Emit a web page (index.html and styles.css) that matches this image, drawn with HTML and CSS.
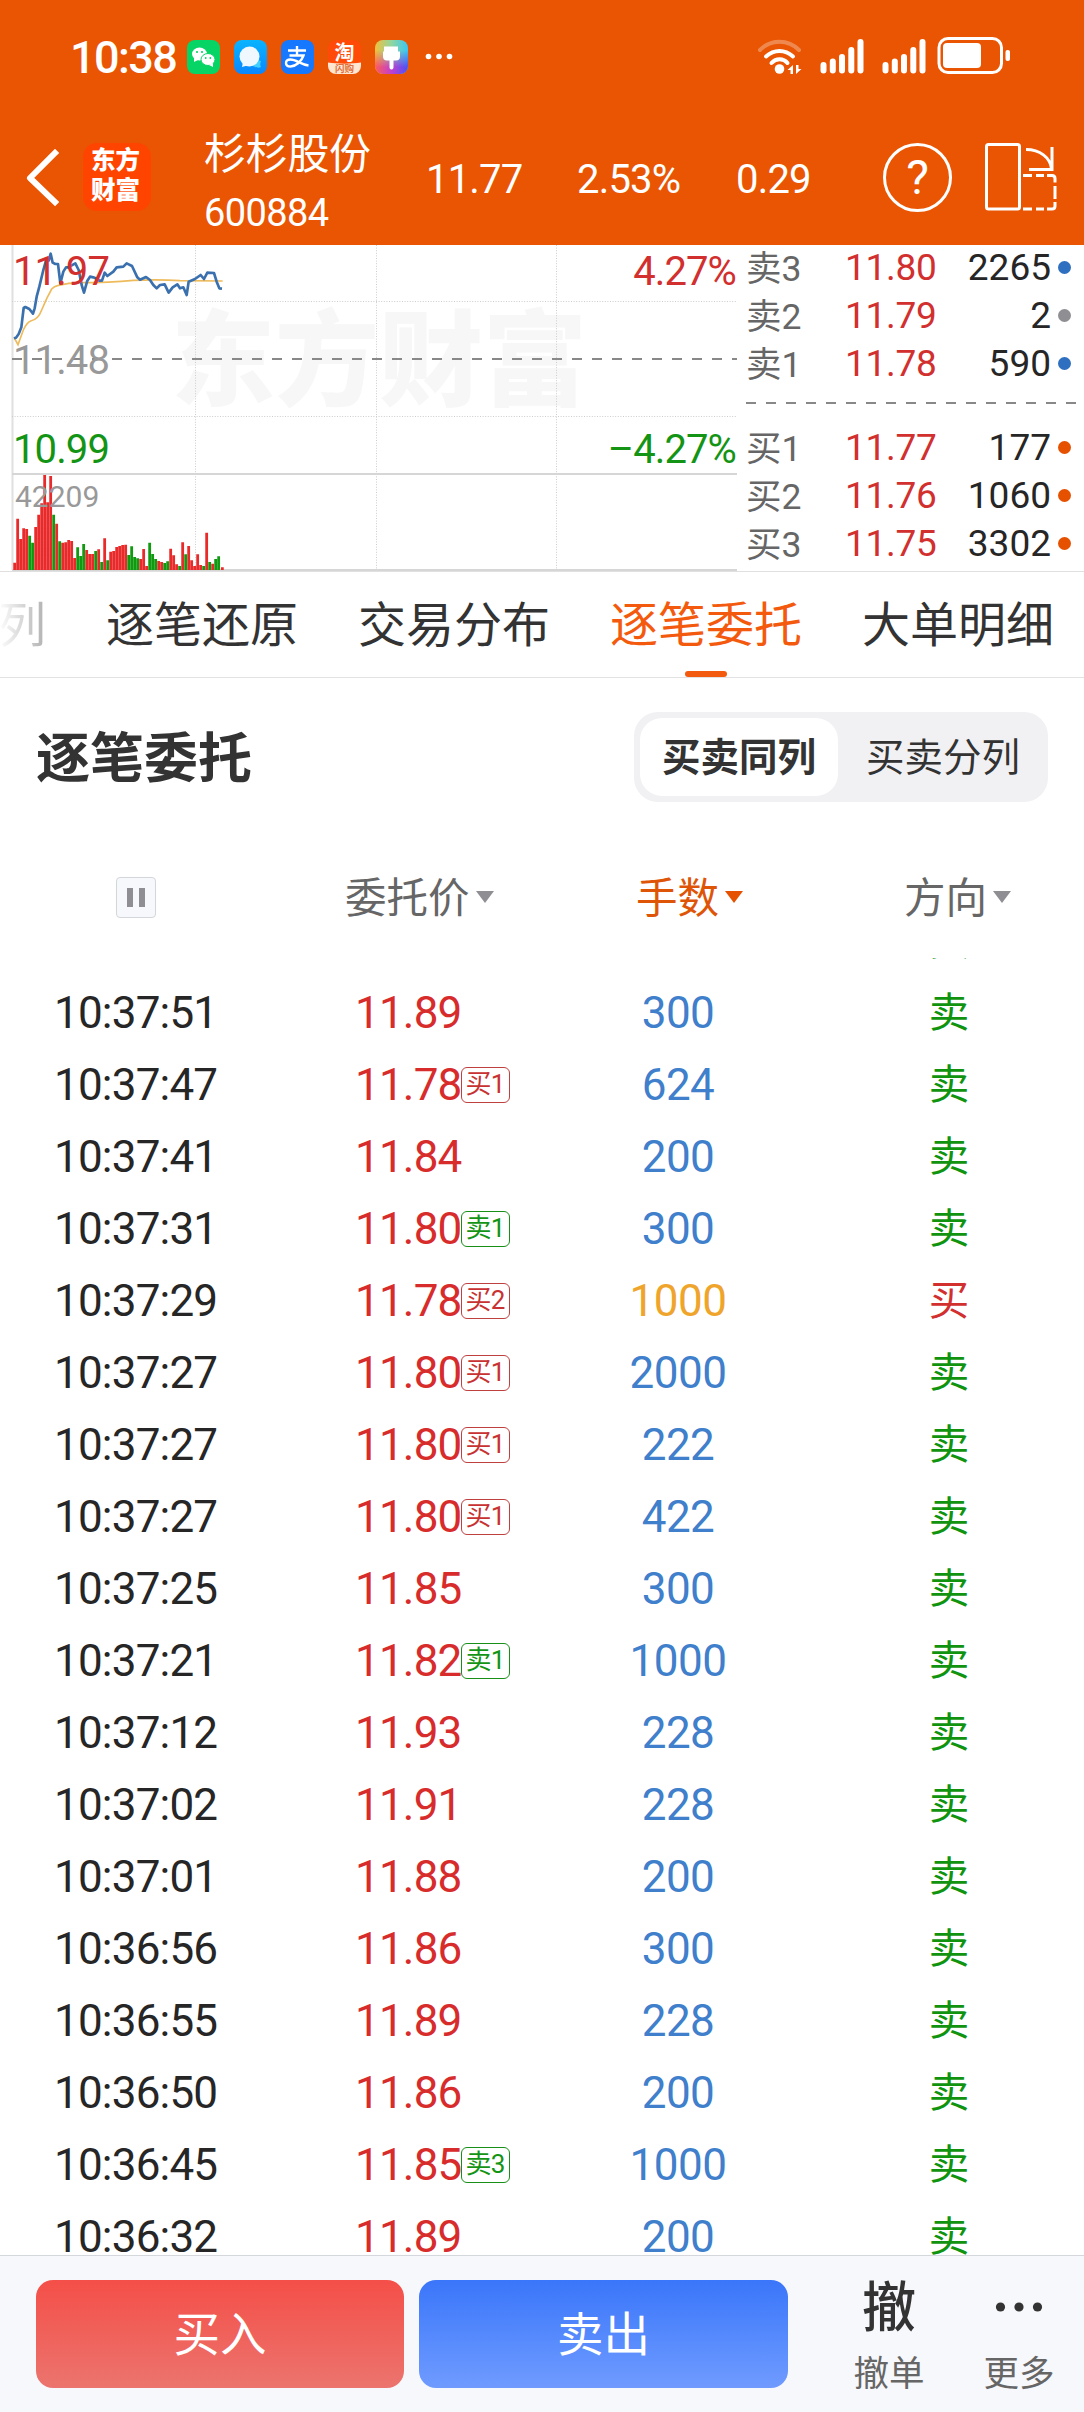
FILE: index.html
```html
<!DOCTYPE html>
<html lang="zh-CN">

<head>
    <meta charset="UTF-8">
    <meta name="viewport" content="width=device-width, initial-scale=1.0">
    <title>杉杉股份 600884 - 逐笔委托</title>
    <link rel="stylesheet" href="styles.css">
</head>

<body>

    <div class="top">
        <div class="status-bar">
            <div class="status-left">
                <span class="clock">10:38</span>
                <svg class="app-icons" width="268" height="34" viewBox="0 0 268 34">
                    <defs>
                        <linearGradient id="msg" x1="0" y1="0" x2="0" y2="1">
                            <stop offset="0" stop-color="#08b4ff" />
                            <stop offset="1" stop-color="#0a86ff" />
                        </linearGradient>
                        <linearGradient id="theme" x1="0" y1="0" x2="1" y2="0">
                            <stop offset="0" stop-color="#f3c03c" />
                            <stop offset="0.5" stop-color="#8fd6a0" />
                            <stop offset="1" stop-color="#3ac8f5" />
                        </linearGradient>
                        <linearGradient id="theme2" x1="0" y1="0" x2="1" y2="0">
                            <stop offset="0" stop-color="#ff5a5a" />
                            <stop offset="0.5" stop-color="#c040d0" />
                            <stop offset="1" stop-color="#4a50f5" />
                        </linearGradient>
                        <linearGradient id="fade" x1="0" y1="0" x2="0" y2="1">
                            <stop offset="0.3" stop-color="#000" />
                            <stop offset="0.8" stop-color="#fff" />
                        </linearGradient>
                        <mask id="lower">
                            <rect x="188" width="33" height="34" fill="url(#fade)" />
                        </mask>
                    </defs>
                    <!-- wechat -->
                    <rect width="33" height="34" rx="8" fill="#06d465" />
                    <ellipse cx="12.5" cy="14" rx="7.5" ry="6.5" fill="#fff" />
                    <path d="M7 18l0 4 4-2z" fill="#fff" />
                    <ellipse cx="21" cy="19.5" rx="7" ry="6" fill="#fff" stroke="#06d465" stroke-width="1" />
                    <path d="M22 25l4 2-0-4z" fill="#fff" />
                    <g fill="#06d465">
                        <circle cx="10" cy="12" r="1.1" />
                        <circle cx="15" cy="12" r="1.1" />
                        <circle cx="18.700" cy="18" r="0.9" />
                        <circle cx="23.300" cy="18" r="0.9" />
                    </g>
                    <!-- messages -->
                    <rect x="47" width="33" height="34" rx="8" fill="url(#msg)" />
                    <path d="M66 26c4 2 6 2 8 1-1-2-1-3 0-6l-4-1z" fill="#3fd0ff" />
                    <circle cx="62.500" cy="16.500" r="10" fill="#eff8ff" />
                    <path d="M56 22l-1 5 7-2z" fill="#eff8ff" />
                    <!-- alipay -->
                    <rect x="94" width="33" height="34" rx="8" fill="#1677ff" />
                    <path d="M101 10.500h18M110 6v9M102.500 15.500h14c-2 6-8 11-13 11-6 0-6-7 0-7 6 0 10 5 18 6" fill="none" stroke="#fff" stroke-width="2.400" />
                    <!-- taobao -->
                    <rect x="141" width="33" height="34" rx="8" fill="#ff4a08" />
                    <path d="M141 22.500c10 1.500 23 1.500 33 0V26a8 8 0 0 1-8 8h-17a8 8 0 0 1-8-8z" fill="#ffe6d2" />
                    <text x="147.500" y="19.500" class="ico-tao">淘</text>
                    <text x="148" y="32" class="ico-sub">闪购</text>
                    <!-- theme -->
                    <rect x="188" width="33" height="34" rx="8" fill="url(#theme)" />
                    <rect x="188" width="33" height="34" rx="8" fill="url(#theme2)" mask="url(#lower)" />
                    <path d="M197 6.500h14v5h2v5q0 4-4 4h-2.500v7a2 2 0 0 1-4 0v-7H200q-4 0-4-4v-5h1z" fill="#fff" />
                    <!-- more -->
                    <g fill="#fff">
                        <circle cx="241.500" cy="16.500" r="2.800" />
                        <circle cx="252" cy="16.500" r="2.800" />
                        <circle cx="262.500" cy="16.500" r="2.800" />
                    </g>
                </svg>
            </div>
            <svg class="system-icons" width="256" height="38" viewBox="0 0 256 38">
                <g fill="none" stroke="#fff" stroke-width="4" stroke-linecap="round">
                    <path d="M3 13c11-11 28-11 39 0" opacity="0.3" />
                    <path d="M9 19.500c8-7.500 19-7.500 27 0" />
                    <path d="M14.500 26c4.500-5 12-5 16 0" />
                </g>
                <circle cx="22.500" cy="32" r="4.800" fill="#fff" />
                <path d="M30.500 33l5.500-5v9h-2.500v-4zM44.500 32l-5.500 5v-9h2.500v4z" fill="#fff" />
                <g stroke="#fff" stroke-width="6" stroke-linecap="round">
                    <path d="M66.500 28v5.500M75.800 24.500v9M85 20v13.500M94.300 13v20.500M103.500 5v28.500" />
                    <path d="M128.500 28v5.500M137.800 24.500v9M147 20v13.500M156.300 13v20.500M165.500 5v28.500" />
                </g>
                <rect x="182" y="1.500" width="62.500" height="34" rx="9" fill="none" stroke="#fff" stroke-width="3" />
                <rect x="186" y="6" width="38" height="25" rx="4" fill="#fff" />
                <rect x="248.500" y="13" width="4.500" height="11" rx="2" fill="#fff" />
            </svg>
        </div>

        <div class="header">
            <svg class="back" width="36" height="60" viewBox="0 0 36 60">
                <path d="M30 6L5 31l25 24" fill="none" stroke="#fff" stroke-width="6" stroke-linejoin="round" stroke-linecap="square" />
            </svg>
            <div class="logo">东方<br>财富</div>
            <div class="stock">
                <div class="stock-name">杉杉股份</div>
                <div class="stock-code">600884</div>
            </div>
            <div class="quote">
                <span>11.77</span>
                <span>2.53%</span>
                <span>0.29</span>
            </div>
            <div class="help">?</div>
            <svg class="rotate" width="74" height="70" viewBox="0 0 74 70" fill="none" stroke="#fff" stroke-width="3">
                <rect x="2.500" y="2.500" width="33" height="64.500" rx="2" />
                <path d="M42 7.500c14 0 24 8 25.500 19M68 5v22.500H45" />
                <path d="M39 33.500h9M52 33.500h8M63 33.500h5q3 0 3 3v4M71 44v13M71 60v4q0 3-3 3h-5M60 67h-8M48 67h-9" />
            </svg>
        </div>
    </div>

    <div class="market">
        <svg class="chart" width="738" height="326" viewBox="0 0 738 326">
            <text x="171" y="153" class="watermark">东方财富</text>

            <!-- grid -->
            <path d="M12.500 0v325" stroke="#e0e0e0" stroke-width="2" />
            <path d="M195.500 0v325M376.500 0v325M556.500 0v325M12 56.500h725M12 171.500h725" stroke="#cdcdcd" stroke-width="1" stroke-dasharray="1 1.600" />
            <path d="M12 229h725M12 325h725" stroke="#d6d6d6" stroke-width="2" />
            <path d="M12 114h725" stroke="#888" stroke-width="2" stroke-dasharray="10 10" />

            <!-- volume and price lines -->
            <g transform="translate(0 -5) scale(0.33333)" fill="none">
                <path class="vol-up" d="M44 990V968M53 990V836M62 990V897M71 990V865M80 990V867M107 990V861M116 990V824M125 990V790M134 990V705M143 990V787M152 990V708M170 990V851M188 990V908M197 990V907M206 990V900M215 990V903M224 990V954M260 990V930M269 990V942M278 990V942M296 990V928M314 990V895M332 990V935M341 990V933M350 990V921M359 990V918M368 990V915M377 990V914M422 990V957M431 990V927M440 990V978M476 990V963M485 990V966M512 990V926M521 990V946M530 990V973M548 990V907M566 990V918M575 990V961M584 990V978M593 990V943M602 990V975M620 990V878M638 990V971M667 990V982" />
                <path class="vol-down" d="M89 990V887M98 990V908M161 990V824M179 990V904M233 990V922M242 990V948M251 990V912M287 990V933M305 990V966M323 990V961M386 990V945M395 990V919M404 990V951M413 990V955M449 990V908M458 990V942M467 990V957M494 990V969M503 990V964M539 990V978M557 990V943M611 990V978M629 990V966M647 990V957M656 990V949" />
                <path class="avg-line" d="M42 292L54 314L70 270Q80 248 92 243Q115 238 125 210L140 176L155 147Q162 139 175 136Q205 128 240 128Q330 128 400 121Q480 118 540 122L668 123" />
                <polyline class="price-line" points="42,295 48,293 56,282 64,262 71,204 76,201 88,207 99,221 104,205 110,170 118,140 130,90 138,62 146,62 152,41 158,68 166,72 174,72 181,130 190,95 198,82 206,82 215,76 226,70 236,90 245,135 252,158 262,122 270,110 280,112 290,116 298,122 306,122 314,98 322,108 340,95 350,82 370,80 380,70 396,78 412,112 420,119 438,111 450,120 460,135 470,145 480,135 494,133 506,158 518,142 532,133 540,145 550,142 560,165 566,125 585,117 602,105 612,117 622,98 642,99 650,125 658,145 666,146" />
            </g>

            <text x="13" y="40" class="axis red">11.97</text>
            <text x="13" y="129" class="axis gray">11.48</text>
            <text x="13" y="218" class="axis green">10.99</text>
            <text x="736" y="40" class="axis end red">4.27%</text>
            <text x="736" y="218" class="axis end green">–4.27%</text>
            <text x="15" y="262" class="axis-vol">42209</text>
        </svg>

        <div class="book">
            <div class="book-row"><span>卖3</span><b>11.80</b><em>2265</em><i class="dot blue"></i></div>
            <div class="book-row"><span>卖2</span><b>11.79</b><em>2</em><i class="dot"></i></div>
            <div class="book-row"><span>卖1</span><b>11.78</b><em>590</em><i class="dot blue"></i></div>
            <div class="book-line"></div>
            <div class="book-row"><span>买1</span><b>11.77</b><em>177</em><i class="dot orange"></i></div>
            <div class="book-row"><span>买2</span><b>11.76</b><em>1060</em><i class="dot orange"></i></div>
            <div class="book-row"><span>买3</span><b>11.75</b><em>3302</em><i class="dot orange"></i></div>
        </div>
    </div>

    <div class="tabs">
        <div class="tab faded">列</div>
        <div class="tab">逐笔还原</div>
        <div class="tab">交易分布</div>
        <div class="tab active">逐笔委托</div>
        <div class="tab">大单明细</div>
    </div>

    <div class="section-head">
        <h1>逐笔委托</h1>
        <div class="segment">
            <div class="seg selected">买卖同列</div>
            <div class="seg">买卖分列</div>
        </div>
    </div>

    <div class="list-head">
        <div class="col-time"><span class="pause"></span></div>
        <div class="sort">委托价</div>
        <div class="sort sorted">手数</div>
        <div class="sort">方向</div>
    </div>

    <div class="list">
        <div class="row"><span></span><span></span><span></span><span class="side">卖</span></div>
        <div class="row"><span>10:37:51</span><span class="price">11.89</span><span class="lots">300</span><span class="side">卖</span></div>
        <div class="row"><span>10:37:47</span><span class="price">11.78<i class="tag">买1</i></span><span class="lots">624</span><span class="side">卖</span></div>
        <div class="row"><span>10:37:41</span><span class="price">11.84</span><span class="lots">200</span><span class="side">卖</span></div>
        <div class="row"><span>10:37:31</span><span class="price">11.80<i class="tag sell">卖1</i></span><span class="lots">300</span><span class="side">卖</span></div>
        <div class="row"><span>10:37:29</span><span class="price">11.78<i class="tag">买2</i></span><span class="lots big">1000</span><span class="side buy">买</span></div>
        <div class="row"><span>10:37:27</span><span class="price">11.80<i class="tag">买1</i></span><span class="lots">2000</span><span class="side">卖</span></div>
        <div class="row"><span>10:37:27</span><span class="price">11.80<i class="tag">买1</i></span><span class="lots">222</span><span class="side">卖</span></div>
        <div class="row"><span>10:37:27</span><span class="price">11.80<i class="tag">买1</i></span><span class="lots">422</span><span class="side">卖</span></div>
        <div class="row"><span>10:37:25</span><span class="price">11.85</span><span class="lots">300</span><span class="side">卖</span></div>
        <div class="row"><span>10:37:21</span><span class="price">11.82<i class="tag sell">卖1</i></span><span class="lots">1000</span><span class="side">卖</span></div>
        <div class="row"><span>10:37:12</span><span class="price">11.93</span><span class="lots">228</span><span class="side">卖</span></div>
        <div class="row"><span>10:37:02</span><span class="price">11.91</span><span class="lots">228</span><span class="side">卖</span></div>
        <div class="row"><span>10:37:01</span><span class="price">11.88</span><span class="lots">200</span><span class="side">卖</span></div>
        <div class="row"><span>10:36:56</span><span class="price">11.86</span><span class="lots">300</span><span class="side">卖</span></div>
        <div class="row"><span>10:36:55</span><span class="price">11.89</span><span class="lots">228</span><span class="side">卖</span></div>
        <div class="row"><span>10:36:50</span><span class="price">11.86</span><span class="lots">200</span><span class="side">卖</span></div>
        <div class="row"><span>10:36:45</span><span class="price">11.85<i class="tag sell">卖3</i></span><span class="lots">1000</span><span class="side">卖</span></div>
        <div class="row"><span>10:36:32</span><span class="price">11.89</span><span class="lots">200</span><span class="side">卖</span></div>
    </div>

    <div class="footer">
        <button class="btn buy-btn">买入</button>
        <button class="btn sell-btn">卖出</button>
        <div class="action">
            <div class="action-icon">撤</div>
            <div>撤单</div>
        </div>
        <div class="action">
            <div class="action-icon">
                <svg width="48" height="12" viewBox="0 0 48 12" fill="#333">
                    <circle cx="5.500" cy="6" r="4.600" />
                    <circle cx="24" cy="6" r="4.600" />
                    <circle cx="42.500" cy="6" r="4.600" />
                </svg>
            </div>
            <div>更多</div>
        </div>
    </div>

</body>

</html>
```
FILE: styles.css
```css
* {
    box-sizing: border-box;
}

body {
    margin: 0;
    width: 1084px;
    height: 2412px;
    display: flex;
    flex-direction: column;
    overflow: hidden;
    background: #fff;
    color: #262626;
    font-family: Roboto, "Noto Sans CJK SC", sans-serif;
}

i,
em {
    font-style: normal;
}

.red {
    fill: #d22f2f;
}

.green {
    fill: #149414;
}

.gray {
    fill: #999;
}

/* Orange header */
.top {
    height: 245px;
    background: #e95503;
    color: #fff;
}

.status-bar {
    height: 109px;
    padding: 0 71px 0 70px;
    display: flex;
    justify-content: space-between;
    align-items: center;
}

.status-left {
    display: flex;
    align-items: center;
    padding-top: 4px;
}

.system-icons {
    margin-top: 2px;
}

.clock {
    width: 117px;
    padding-top: 2px;
    font-size: 45px;
    font-weight: 500;
    line-height: 40px;
    letter-spacing: -1.6px;
}

.ico-tao {
    font-size: 20px;
    font-weight: 700;
    fill: #fff;
}

.ico-sub {
    font-size: 9.5px;
    font-weight: 700;
    fill: #e0703a;
}

.header {
    height: 136px;
    padding-left: 25px;
    display: flex;
    align-items: center;
}

.logo {
    width: 68px;
    height: 68px;
    margin-left: 22px;
    padding: 3px 3px 0 0;
    border-radius: 14px;
    background: #ff4400;
    font-size: 24.5px;
    font-weight: 900;
    line-height: 30px;
    text-align: center;
}

.stock {
    width: 222px;
    margin-left: 53px;
    padding-top: 13px;
}

.stock-name {
    font-size: 42px;
    line-height: 56px;
    letter-spacing: -0.3px;
}

.stock-code {
    font-size: 38px;
    line-height: 56px;
    letter-spacing: -0.6px;
    margin-top: 2px;
}

.quote {
    width: 457px;
    display: flex;
    font-size: 40px;
    letter-spacing: -0.8px;
    padding-top: 4px;
}

.quote span:nth-child(1) {
    width: 151px;
}

.quote span:nth-child(2) {
    width: 159px;
}

.help {
    width: 69px;
    height: 69px;
    border: 3px solid #fff;
    border-radius: 50%;
    font-size: 48px;
    line-height: 64px;
    text-align: center;
}

.rotate {
    margin-left: 32px;
}

/* Minute chart and order book */
.market {
    height: 327px;
    display: flex;
    border-bottom: 1px solid #e0e0e0;
}

.watermark {
    font-size: 104px;
    font-weight: 900;
    fill: #f7f7f7;
}

.vol-up {
    stroke: #e82a2a;
    stroke-width: 8.4;
}

.vol-down {
    stroke: #109a10;
    stroke-width: 8.4;
}

.avg-line {
    stroke: #eebb5c;
    stroke-width: 5;
}

.price-line {
    stroke: #3a70ae;
    stroke-width: 8;
    stroke-linejoin: round;
}

.axis {
    font-size: 40px;
    letter-spacing: -0.9px;
}

.axis.end {
    text-anchor: end;
}

.axis-vol {
    font-size: 30px;
    fill: #999;
}

.book {
    width: 346px;
    margin-top: -2px;
    padding: 0 13px 0 8px;
}

.book-row {
    height: 48px;
    display: flex;
    align-items: center;
    font-size: 37px;
}

.book-row span {
    width: 99px;
    padding-bottom: 4px;
    color: #666;
    font-size: 35.5px;
}

.book-row b {
    width: 100px;
    font-weight: 400;
    color: #d22f2f;
    letter-spacing: -0.3px;
}

.book-row em {
    flex: 1;
    text-align: right;
}

.dot {
    width: 13px;
    height: 13px;
    margin-left: 7px;
    border-radius: 50%;
    background: #8e8e93;
}

.dot.blue {
    background: #2f6fc0;
}

.dot.orange {
    background: #e65100;
}

.book-line {
    height: 2px;
    margin: 15px -6px 19px 0;
    background: repeating-linear-gradient(90deg, #888 0 10px, transparent 10px 20px);
}

/* Tabs */
.tabs {
    height: 106px;
    display: flex;
    gap: 60px;
    border-bottom: 1px solid #e2e2e2;
}

.tab {
    position: relative;
    flex: none;
    font-size: 48px;
    line-height: 107px;
    color: #333;
}

.tab.faded {
    margin-left: -2px;
    background: linear-gradient(90deg, #fff, #b0b0b0);
    -webkit-background-clip: text;
    background-clip: text;
    color: transparent;
}

.tab.active {
    color: #f45a0e;
}

.tab.active::after {
    content: "";
    position: absolute;
    left: 75px;
    bottom: 0;
    width: 42px;
    height: 6px;
    border-radius: 3px;
    background: #f45a0e;
}

.section-head {
    height: 158px;
    padding: 0 36px;
    display: flex;
    justify-content: space-between;
    align-items: center;
}

h1 {
    margin: 0;
    padding-bottom: 5px;
    font-size: 54px;
    font-weight: 700;
    color: #333;
}

.segment {
    height: 90px;
    margin-bottom: 1px;
    padding: 6px;
    display: flex;
    gap: 6px;
    border-radius: 24px;
    background: #f1f1f4;
}

.seg {
    width: 198px;
    border-radius: 22px;
    font-size: 38.5px;
    line-height: 79px;
    text-align: center;
    color: #333;
}

.seg.selected {
    background: #fff;
    font-weight: 700;
}

/* Order list */
.list-head {
    height: 122px;
    display: grid;
    grid-template-columns: 345px 291px 268px 1fr;
    align-items: center;
    font-size: 41.5px;
    color: #666;
}

.col-time {
    padding-left: 116px;
}

.pause {
    display: block;
    width: 40px;
    height: 41px;
    padding: 10px 0 0 10px;
    border: 1px solid #d3d6da;
    border-radius: 4px;
    background: #f6f8fb;
}

.pause::before {
    content: "";
    display: block;
    width: 6px;
    height: 19px;
    border: solid #8e8e93;
    border-width: 0 6px;
}

.sort {
    display: flex;
    align-items: center;
    line-height: 50px;
    padding-top: 3px;
}

.sort::after {
    content: "";
    margin: 0 0 3px 6px;
    border: 9px solid transparent;
    border-top: 12px solid #8e8e93;
    border-bottom: 0;
}

.sort.sorted {
    color: #de5508;
}

.sort.sorted::after {
    border-top-color: #e65100;
}

.list {
    height: 1297px;
    overflow: hidden;
}

/* list is scrolled partly past its first row */
.row:first-child {
    margin-top: -54px;
}

.row {
    height: 72px;
    padding: 2px 0 0 54px;
    display: grid;
    grid-template-columns: 301px 223px 200px 341px;
    align-items: center;
    font-size: 44px;
    line-height: 60px;
    letter-spacing: -0.8px;
}

.price {
    display: flex;
    align-items: center;
    color: #d82c2c;
}

.tag {
    width: 49px;
    height: 36px;
    margin: 0 0 0 -1px;
    border: 1px solid #c04040;
    border-radius: 6px;
    font-size: 26px;
    line-height: 33px;
    text-align: center;
    color: #c83232;
}

.tag.sell {
    border-color: #189018;
    color: #149414;
}

.lots {
    text-align: center;
    letter-spacing: -0.5px;
    color: #3f7fcb;
}

.lots.big {
    color: #efa52c;
}

.side {
    padding-bottom: 1px;
    text-align: center;
    font-size: 40.5px;
    color: #109410;
}

.side.buy {
    color: #d22f2f;
}

/* Bottom bar */
.footer {
    flex: 1;
    padding: 24px 0 0 36px;
    display: flex;
    align-items: flex-start;
    border-top: 1px solid #d4d7dc;
    background: #f7f8fb;
}

.btn {
    width: 368px;
    height: 108px;
    margin-right: 15px;
    padding: 0 0 7px;
    border: none;
    border-radius: 17px;
    color: #fff;
    font-family: inherit;
    font-size: 46.5px;
}

.buy-btn {
    background: linear-gradient(#f44f48, #ec746e);
}

.sell-btn {
    width: 369px;
    background: linear-gradient(#3a76fa, #6f9bff);
}

.action {
    width: 130px;
    font-size: 35.5px;
    line-height: 48px;
    text-align: center;
    color: #666;
}

.sell-btn + .action {
    margin-left: 21px;
}

.action-icon {
    height: 70px;
    font-size: 54px;
    font-weight: 500;
    line-height: 57px;
    color: #333;
}

.action-icon svg {
    display: block;
    margin: 0 auto;
    padding-top: 21px;
    height: 33px;
}
```
